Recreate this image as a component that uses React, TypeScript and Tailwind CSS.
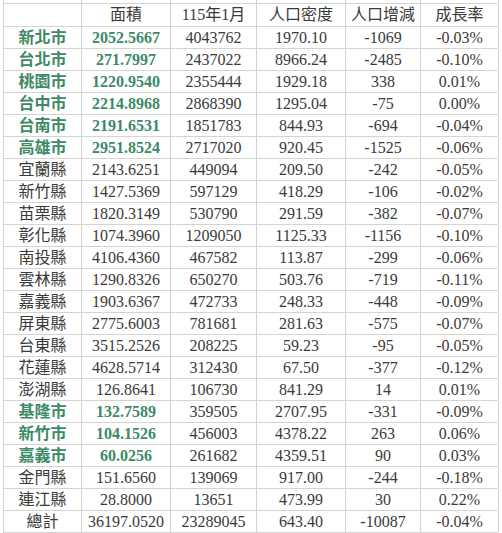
const cols = ["w-[78px]", "w-[89px]", "w-[86px]", "w-[89px]", "w-[75px]", "w-[78px]"];

const rows: [string, string, string, string, string, string, boolean][] = [
  ["新北市", "2052.5667", "4043762", "1970.10", "-1069", "-0.03%", true],
  ["台北市", "271.7997", "2437022", "8966.24", "-2485", "-0.10%", true],
  ["桃園市", "1220.9540", "2355444", "1929.18", "338", "0.01%", true],
  ["台中市", "2214.8968", "2868390", "1295.04", "-75", "0.00%", true],
  ["台南市", "2191.6531", "1851783", "844.93", "-694", "-0.04%", true],
  ["高雄市", "2951.8524", "2717020", "920.45", "-1525", "-0.06%", true],
  ["宜蘭縣", "2143.6251", "449094", "209.50", "-242", "-0.05%", false],
  ["新竹縣", "1427.5369", "597129", "418.29", "-106", "-0.02%", false],
  ["苗栗縣", "1820.3149", "530790", "291.59", "-382", "-0.07%", false],
  ["彰化縣", "1074.3960", "1209050", "1125.33", "-1156", "-0.10%", false],
  ["南投縣", "4106.4360", "467582", "113.87", "-299", "-0.06%", false],
  ["雲林縣", "1290.8326", "650270", "503.76", "-719", "-0.11%", false],
  ["嘉義縣", "1903.6367", "472733", "248.33", "-448", "-0.09%", false],
  ["屏東縣", "2775.6003", "781681", "281.63", "-575", "-0.07%", false],
  ["台東縣", "3515.2526", "208225", "59.23", "-95", "-0.05%", false],
  ["花蓮縣", "4628.5714", "312430", "67.50", "-377", "-0.12%", false],
  ["澎湖縣", "126.8641", "106730", "841.29", "14", "0.01%", false],
  ["基隆市", "132.7589", "359505", "2707.95", "-331", "-0.09%", true],
  ["新竹市", "104.1526", "456003", "4378.22", "263", "0.06%", true],
  ["嘉義市", "60.0256", "261682", "4359.51", "90", "0.03%", true],
  ["金門縣", "151.6560", "139069", "917.00", "-244", "-0.18%", false],
  ["連江縣", "28.8000", "13651", "473.99", "30", "0.22%", false],
  ["總計", "36197.0520", "23289045", "643.40", "-10087", "-0.04%", false],
];

const header = ["", "面積", "115年1月", "人口密度", "人口增減", "成長率"];

export default function App() {
  return (
    <div
      className="w-[502px] h-[533px] overflow-hidden bg-white text-[16px] text-[#3a3a3a]"
      style={{ fontFamily: '"Liberation Serif", "Noto Sans CJK TC", serif' }}
    >
      <div className="ml-[3px] w-[495px] border-l border-[#d4d4d4]">
        <div className="h-[4px] flex border-b border-[#d4d4d4]">
          {cols.map((w, i) => (
            <div key={i} className={`${w} shrink-0 border-r border-[#d4d4d4]`} />
          ))}
        </div>
        <div className="flex h-[23px] border-b border-[#d4d4d4]">
          {header.map((h, i) => (
            <div
              key={i}
              className={`${cols[i]} shrink-0 flex items-center justify-center border-r border-[#d4d4d4] leading-none`}
            >
              {h}
            </div>
          ))}
        </div>
        {rows.map((r) => (
          <div key={r[0]} className="flex h-[22px] border-b border-[#d4d4d4]">
            {r.slice(0, 6).map((c, i) => (
              <div
                key={i}
                className={`${cols[i]} shrink-0 flex items-center justify-center border-r border-[#d4d4d4] leading-none ${
                  r[6] && i < 2 ? "font-bold text-[#3d8a66]" : ""
                }`}
              >
                {c as string}
              </div>
            ))}
          </div>
        ))}
      </div>
    </div>
  );
}
